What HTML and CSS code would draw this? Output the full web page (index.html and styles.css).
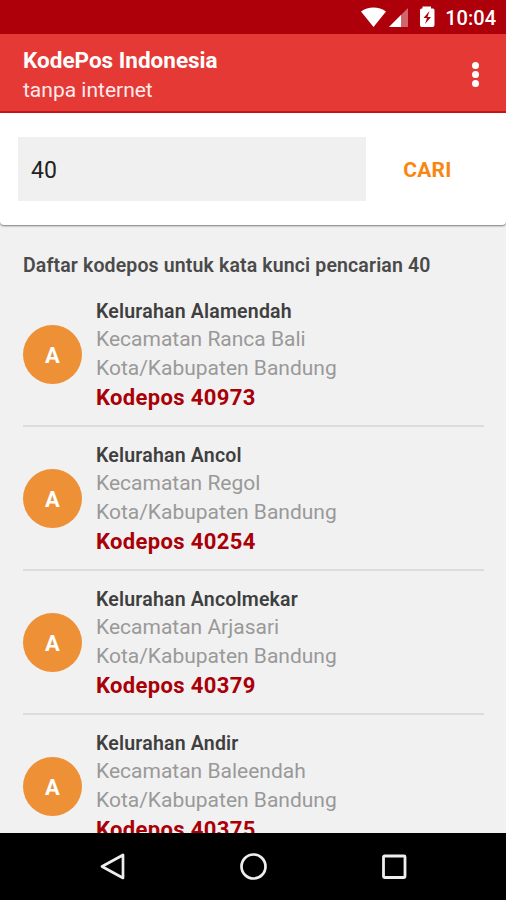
FILE: index.html
```html
<!DOCTYPE html>
<html lang="id">
<head>
  <meta charset="utf-8">
  <title>KodePos Indonesia</title>
  <link rel="stylesheet" href="styles.css">
</head>

<body>
  <div class="app">
    <div class="status-bar">
      <svg class="status-icons" width="76" height="22" viewBox="0 0 76 22">
        <path d="M2 5.500C9 .3 20 .3 27 5.500L14.500 21z" fill="#fff"/>
        <path d="M30 21L49 2V21z" fill="#fff" opacity=".4"/>
        <path d="M30 21L42 9V21z" fill="#fff"/>
        <path d="M63.500 2.500V.5H72V2.500H74Q75.500 2.500 75.500 4.500V19Q75.500 21 73.500 21H62.500Q61 21 61 19V4.500Q61 2.500 62.500 2.500z" fill="#fff"/>
        <path d="M70.500 5L64.500 12H68L66 18L72 11H68.500z" fill="#ad000b"/>
      </svg>
      <span class="time">10:04</span>
    </div>

    <div class="header">
      <div>
        <div class="title">KodePos Indonesia</div>
        <div class="subtitle">tanpa internet</div>
      </div>
      <div class="menu">
        <span class="dot"></span>
        <span class="dot"></span>
        <span class="dot"></span>
      </div>
    </div>

    <div class="search">
      <input class="search-input" type="text" value="40">
      <button class="search-button">CARI</button>
    </div>

    <div class="content">
      <div class="list-title">Daftar kodepos untuk kata kunci pencarian 40</div>

      <div class="item">
        <div class="avatar">A</div>
        <div class="info">
          <div class="kelurahan">Kelurahan Alamendah</div>
          <div class="area">Kecamatan Ranca Bali</div>
          <div class="area">Kota/Kabupaten Bandung</div>
          <div class="kodepos">Kodepos 40973</div>
        </div>
      </div>

      <div class="item">
        <div class="avatar">A</div>
        <div class="info">
          <div class="kelurahan">Kelurahan Ancol</div>
          <div class="area">Kecamatan Regol</div>
          <div class="area">Kota/Kabupaten Bandung</div>
          <div class="kodepos">Kodepos 40254</div>
        </div>
      </div>

      <div class="item">
        <div class="avatar">A</div>
        <div class="info">
          <div class="kelurahan">Kelurahan Ancolmekar</div>
          <div class="area">Kecamatan Arjasari</div>
          <div class="area">Kota/Kabupaten Bandung</div>
          <div class="kodepos">Kodepos 40379</div>
        </div>
      </div>

      <div class="item">
        <div class="avatar">A</div>
        <div class="info">
          <div class="kelurahan">Kelurahan Andir</div>
          <div class="area">Kecamatan Baleendah</div>
          <div class="area">Kota/Kabupaten Bandung</div>
          <div class="kodepos">Kodepos 40375</div>
        </div>
      </div>
    </div>

    <div class="nav-bar">
      <svg width="28" height="28" viewBox="0 0 28 28">
        <path d="M4 13.500L25 2V25z" fill="none" stroke="#eee" stroke-width="2.700" stroke-linejoin="round"/>
      </svg>
      <svg width="28" height="28" viewBox="0 0 28 28">
        <circle cx="14.500" cy="13.500" r="12" fill="none" stroke="#eee" stroke-width="2.700"/>
      </svg>
      <svg width="28" height="28" viewBox="0 0 28 28">
        <rect x="3.500" y="3" width="21.500" height="21.500" rx="1" fill="none" stroke="#eee" stroke-width="2.800"/>
      </svg>
    </div>
  </div>
</body>
</html>
```

FILE: styles.css
```css
* {
  box-sizing: border-box;
}

body {
  margin: 0;
  font-family: Roboto, sans-serif;
  background: #f1f1f1;
}

.app {
  display: flex;
  flex-direction: column;
  height: 900px;
  overflow: hidden;
}

.status-bar {
  display: flex;
  flex: none;
  justify-content: flex-end;
  align-items: center;
  gap: 10px;
  height: 34px;
  padding-right: 10px;
  background: #ad000b;
  color: #fff;
}

.time {
  font-size: 20px;
  font-weight: 500;
  line-height: 34px;
  padding-top: 2px;
}

.header {
  display: flex;
  flex: none;
  justify-content: space-between;
  height: 79px;
  padding: 12px 27px 0 23px;
  background: #e53935;
  border-bottom: 2px solid #c91619;
  color: #fff;
}

.title {
  font-size: 22.5px;
  font-weight: 700;
  line-height: 28px;
}

.subtitle {
  font-size: 21px;
  line-height: 33px;
  color: #ffebeb;
}

.menu {
  display: flex;
  flex-direction: column;
  gap: 2px;
  padding-top: 16px;
}

.dot {
  width: 7px;
  height: 7px;
  border-radius: 50%;
  background: #fff;
}

.search {
  display: flex;
  flex: none;
  align-items: flex-start;
  height: 112px;
  padding: 24px 17px 0 18px;
  background: #fff;
  border-radius: 0 0 4px 4px;
  box-shadow: 0 1px 2px rgba(0, 0, 0, 0.5);
}

.search-input {
  width: 348px;
  height: 64px;
  padding: 2px 13px 0;
  border: 0;
  outline: 0;
  background: #f0f0f0;
  font-family: inherit;
  font-size: 23px;
  color: #222;
}

.search-button {
  flex: 1;
  height: 64px;
  padding: 2px 0 0;
  border: 0;
  background: none;
  font-family: inherit;
  font-size: 21px;
  font-weight: 700;
  letter-spacing: 0.3px;
  color: #f98611;
}

.content {
  flex: 1;
  min-height: 0;
  padding: 24px 22px 0 23px;
  overflow: hidden;
}

.list-title {
  height: 34px;
  font-size: 19.5px;
  font-weight: 600;
  letter-spacing: 0.14px;
  line-height: 34px;
  color: #4a4a4a;
}

.item {
  display: flex;
  align-items: center;
  gap: 14px;
  height: 144px;
  border-bottom: 2px solid #dcdcdc;
}

.avatar {
  display: flex;
  flex: none;
  justify-content: center;
  align-items: center;
  width: 59px;
  height: 59px;
  padding-top: 2px;
  border-radius: 50%;
  background: #ee9035;
  font-size: 22px;
  font-weight: 700;
  color: #fff;
}

.info {
  padding-top: 4.4px;
  line-height: 28.7px;
  white-space: nowrap;
}

.kelurahan {
  font-size: 19.5px;
  font-weight: 600;
  letter-spacing: 0.2px;
  line-height: 26px;
  color: #3f3f3f;
}

.area {
  font-size: 21px;
  color: #999;
}

.kodepos {
  font-size: 22px;
  font-weight: 700;
  letter-spacing: 0.35px;
  line-height: 31px;
  color: #a90008;
}

.nav-bar {
  display: flex;
  flex: none;
  justify-content: center;
  align-items: center;
  gap: 113px;
  height: 67px;
  background: #000;
}
```
